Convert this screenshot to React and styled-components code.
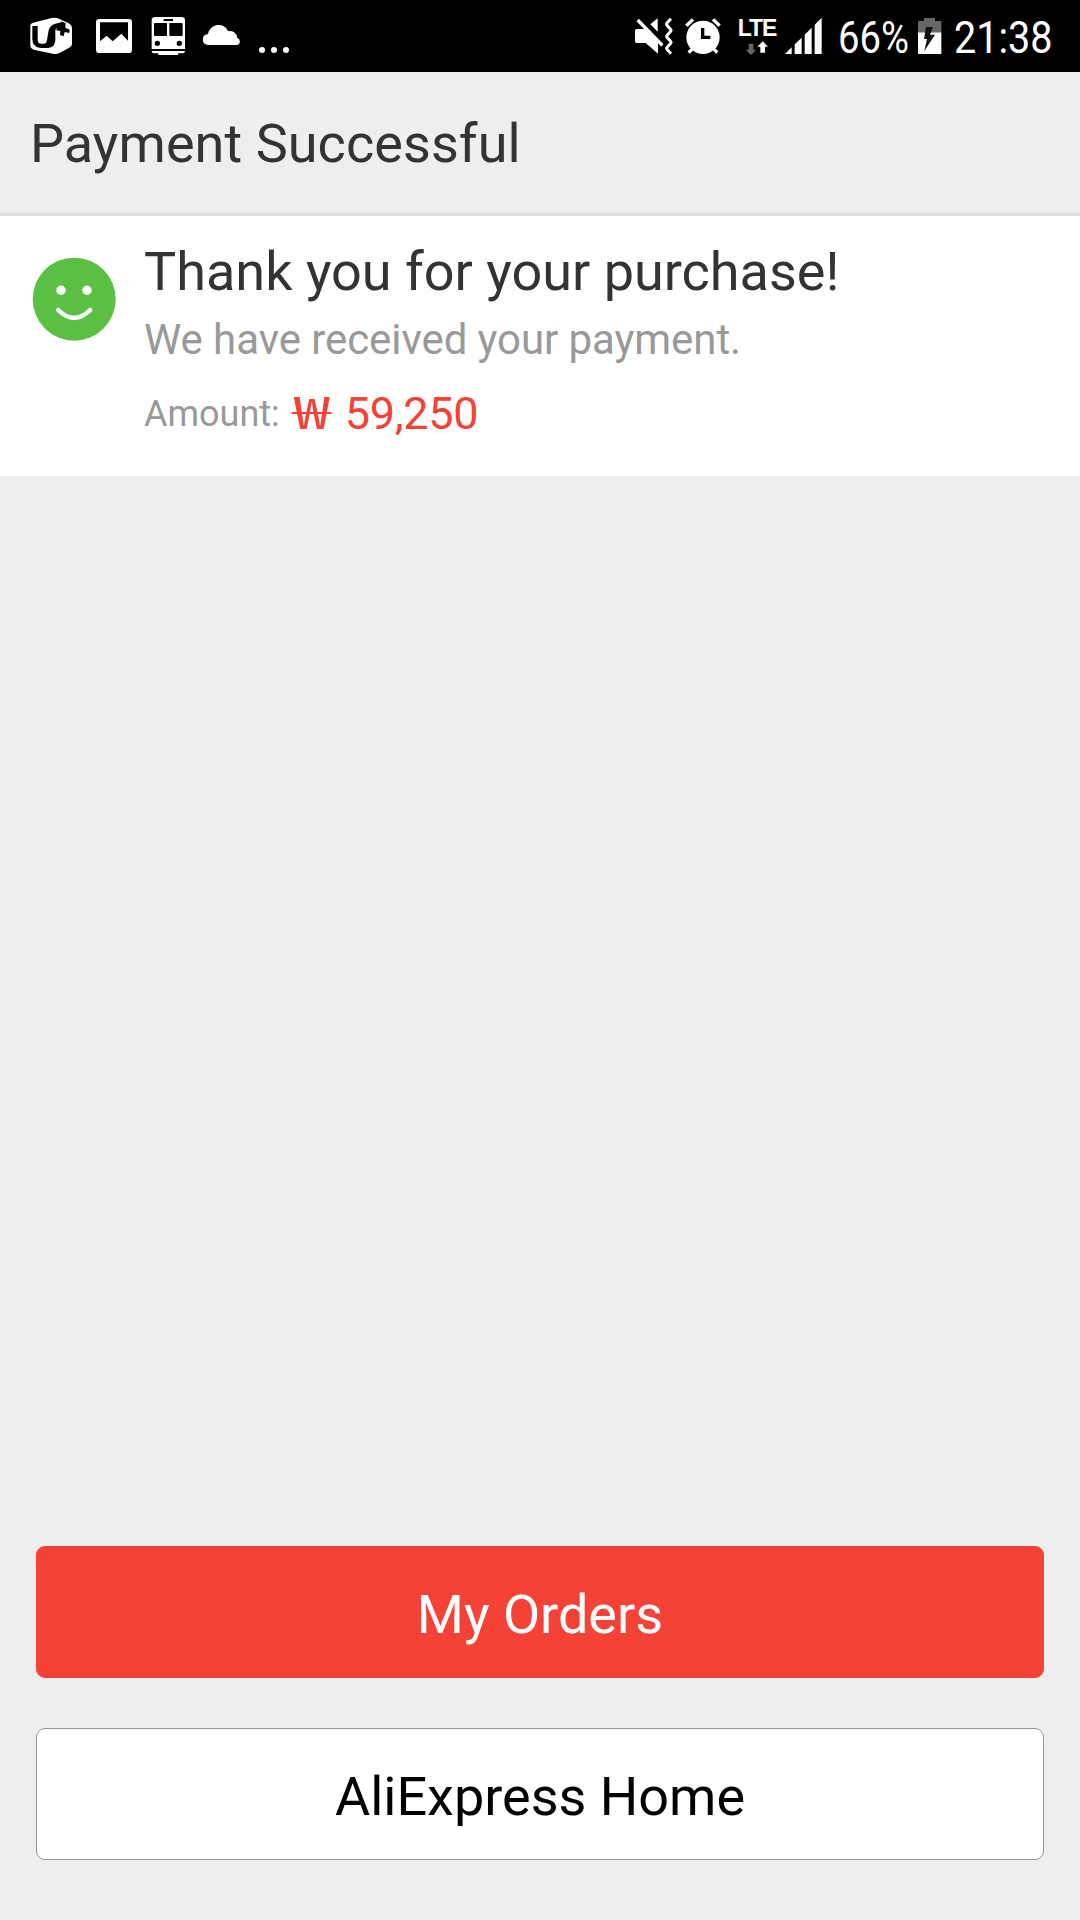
import React from "react";
import styled, { createGlobalStyle } from 'styled-components'

const GlobalStyle = createGlobalStyle`
    * {
        box-sizing: border-box;
    }

    body {
        margin: 0;
        background: #eeeeee;
        font-family: Roboto, "Noto Sans", sans-serif;
    }
`

const Screen = styled.div`
    display: flex;
    flex-direction: column;
    width: 1080px;
    height: 1920px;
    background: #eeeeee;
    overflow: hidden;
`

const StatusBar = styled.div`
    display: flex;
    justify-content: space-between;
    height: 72px;
    padding: 0 27px 0 30px;
    background: #000;
    color: #fff;
`

const StatusGroup = styled.div`
    display: flex;
    height: 72px;
`

const StatusIcon = styled.svg`
    display: block;
    flex: none;
    width: ${props => props.$width}px;
    height: 72px;
    margin-right: ${props => props.$gap || 0}px;
    fill: #fff;
`

const Network = styled.div`
    display: flex;
    flex-direction: column;
    align-items: center;
    width: 38px;
    margin-right: 9px;
    padding-top: 17px;
`

const NetworkLabel = styled.span`
    height: 24px;
    font: bold 23px/22px "Liberation Sans", Arial, sans-serif;
    letter-spacing: -1px;
    white-space: nowrap;
`

const Arrows = styled.svg`
    display: block;
    width: 22px;
    height: 14px;
`

// narrow system digits, box keeps the width after scaling
const StatusText = styled.span`
    flex: none;
    width: ${props => props.$width}px;
    margin-right: ${props => props.$gap || 0}px;
    font-size: 45px;
    line-height: 75px;
    white-space: nowrap;
    transform: scaleX(${props => props.$squeeze});
    transform-origin: 0 50%;
`

const Header = styled.header`
    display: flex;
    align-items: center;
    height: 144px;
    padding: 2px 30px 0;
    border-bottom: 3px solid #dddddd;
`

const Title = styled.h1`
    margin: 0;
    color: #333333;
    font-size: 54px;
    font-weight: 400;
    line-height: 64px;
    letter-spacing: 0.06px;
`

const Receipt = styled.section`
    display: flex;
    height: 260px;
    padding: 24px 32px 0;
    background: #fff;
`

const Smiley = styled.svg`
    flex: none;
    width: 84px;
    height: 84px;
    margin: 17px 28px 0 0;
`

const Thanks = styled.h2`
    margin: 0;
    color: #333333;
    font-size: 54px;
    font-weight: 400;
    line-height: 64px;
`

const Message = styled.p`
    margin: 11px 0 0;
    color: #999999;
    font-size: 42px;
    line-height: 50px;
    letter-spacing: -0.07px;
`

const AmountRow = styled.div`
    display: flex;
    align-items: center;
    margin-top: 22px;
    color: #999999;
    font-size: 36px;
    line-height: 54px;
`

const Price = styled.span`
    margin-left: 13px;
    color: #f44336;
    font-size: 45px;
    letter-spacing: -0.3px;
`

const Currency = styled.span`
    display: inline-block;
    width: 41px;
    font-family: "Noto Sans CJK KR", sans-serif;
    line-height: 45px;
    transform: scaleX(1.5);
    transform-origin: 0 50%;
`

const Actions = styled.div`
    display: flex;
    flex-direction: column;
    gap: 50px;
    margin-top: auto;
    padding: 0 36px 60px;
`

const Button = styled.button`
    height: 132px;
    padding: 5px 0 0;
    border: 1px solid ${props => props.$primary ? '#f44336' : '#999999'};
    border-radius: 9px;
    background: ${props => props.$primary ? '#f44336' : '#fff'};
    color: ${props => props.$primary ? '#fff' : '#000'};
    font-family: inherit;
    font-size: 54px;
    line-height: 64px;
`

function Notifications() {
    return (
        <StatusGroup>
            {/* carrier cube */}
            <StatusIcon $width={42} $gap={24} viewBox="90 0 126 216">
                <path d="M91 76Q92 70 99 68L155 54Q168 52 177 56L209 71Q216 76 216 84V132Q216 138 210 142L179 159Q169 164 158 161L101 149Q92 146 91 139Z" />
                <path d="M97 78H113V120Q113 131 124 131H131Q140 131 141 120L146 91Q149 76 166 71L184 67L190 78L172 82Q166 84 166 92V121Q165 143 144 144H123Q97 142 97 117Z" fill="#000" />
                <path d="M184 64L197 70L196 83L209 89L208 99L194 96L191 109L180 105L181 93L169 91L170 80L183 79Z" fill="#000" />
            </StatusIcon>
            {/* screenshot saved */}
            <StatusIcon $width={36} $gap={19} viewBox="288 0 108 216">
                <path fillRule="evenodd" d="M298 57H386Q396 57 396 67V149Q396 159 386 159H298Q288 159 288 149V67Q288 57 298 57ZM300 67V124L320 107L338 124L364 101L384 122V67Z" />
            </StatusIcon>
            {/* transit */}
            <StatusIcon $width={34} $gap={18} viewBox="453 0 102 216">
                <path fillRule="evenodd" d="M466 51H545Q555 51 555 61V147H455V61Q455 51 466 51ZM491 57V63H519V57ZM465 69Q462 69 462 72V105Q462 108 465 108H498Q501 108 501 105V69ZM508 69V105Q508 108 511 108H545Q548 108 548 105V72Q548 69 545 69ZM472 122A8 8 0 1 0 472 138A8 8 0 1 0 472 122ZM538 122A8 8 0 1 0 538 138A8 8 0 1 0 538 122Z" />
                <path d="M455 153H555Q555 160 548 160H534V165H475V160H462Q455 160 455 153Z" />
            </StatusIcon>
            <StatusIcon $width={38} $gap={18} viewBox="609 0 114 216">
                <path d="M625 135A16 16 0 0 1 624 102A32 32 0 0 1 685 94A22 22 0 0 1 712 114A11 11 0 0 1 712 135Z" />
            </StatusIcon>
            <StatusIcon $width={30} viewBox="777 0 90 216">
                <circle cx="786" cy="150" r="9" />
                <circle cx="822" cy="150" r="9" />
                <circle cx="858" cy="150" r="9" />
            </StatusIcon>
        </StatusGroup>
    );
}

function SystemStatus() {
    return (
        <StatusGroup>
            {/* vibrate */}
            <StatusIcon $width={39} $gap={11} viewBox="45 0 117 216">
                <path d="M50 87H71L76 82L114 122V161L77 129H50Q45 129 45 124V92Q45 87 50 87Z" />
                <path d="M91 73L113 55V95Z" />
                <path d="M53 60L127 136" stroke="#fff" strokeWidth="10" />
                <path d="M153 56L141 69Q138 73 142 77L151 87Q155 91 151 95L142 105Q138 109 142 113L151 123Q155 127 151 131L142 141Q138 145 142 149L153 161" fill="none" stroke="#fff" strokeWidth="9" />
            </StatusIcon>
            {/* alarm */}
            <StatusIcon $width={36} $gap={17} viewBox="195 0 108 216">
                <path d="M199 77L219 58M279 58L299 77" stroke="#fff" strokeWidth="10" />
                <path d="M218 146L206 158M280 146L292 158" stroke="#fff" strokeWidth="10" />
                <circle cx="249" cy="112" r="50" />
                <path d="M248 84V112H271" fill="none" stroke="#000" strokeWidth="10" />
            </StatusIcon>
            <Network>
                <NetworkLabel>LTE</NetworkLabel>
                <Arrows viewBox="380 121 66 42">
                    <path d="M388 129H402V147H411L395 163L379 147H388Z" fill="#666" />
                    <path d="M430 122L446 138H437V156H423V138H414Z" fill="#fff" />
                </Arrows>
            </Network>
            <StatusIcon $width={37} $gap={16} viewBox="496 0 111 216">
                <path d="M496 162L516 142V162ZM525 162V133L546 113V162ZM555 162V104L576 83V162ZM585 162V74L606 53V162Z" />
            </StatusIcon>
            <StatusText $width={76} $gap={4} $squeeze={0.85}>66%</StatusText>
            {/* battery, charging */}
            <StatusIcon $width={24} $gap={12} viewBox="294 0 72 216">
                <path d="M312 54H345V63H364V97H294V63H312Z" fill="#666" />
                <path d="M294 97H364V162H294Z" />
                <path d="M318 81H339L330 104H345L313 153L321 117H312Z" fill="#111" />
            </StatusIcon>
            <StatusText $width={99} $squeeze={0.88}>21:38</StatusText>
        </StatusGroup>
    );
}

function App() {
    return (
        <Screen>
            <GlobalStyle />
            <StatusBar>
                <Notifications />
                <SystemStatus />
            </StatusBar>
            <Header>
                <Title>Payment Successful</Title>
            </Header>
            <Receipt>
                <Smiley viewBox="0 0 84 84">
                    <circle cx="42.2" cy="42.2" r="41.5" fill="#5bbf43" />
                    <circle cx="29" cy="33.2" r="4.7" fill="#fff" />
                    <circle cx="55" cy="33.2" r="4.7" fill="#fff" />
                    <path d="M26.2 53Q42.2 69 58.2 53" fill="none" stroke="#fff" strokeWidth="4.5" strokeLinecap="round" />
                </Smiley>
                <div>
                    <Thanks>Thank you for your purchase!</Thanks>
                    <Message>We have received your payment.</Message>
                    <AmountRow>
                        Amount:
                        <Price><Currency>₩</Currency> 59,250</Price>
                    </AmountRow>
                </div>
            </Receipt>
            <Actions>
                <Button $primary>My Orders</Button>
                <Button>AliExpress Home</Button>
            </Actions>
        </Screen>
    );
}

export default App;
